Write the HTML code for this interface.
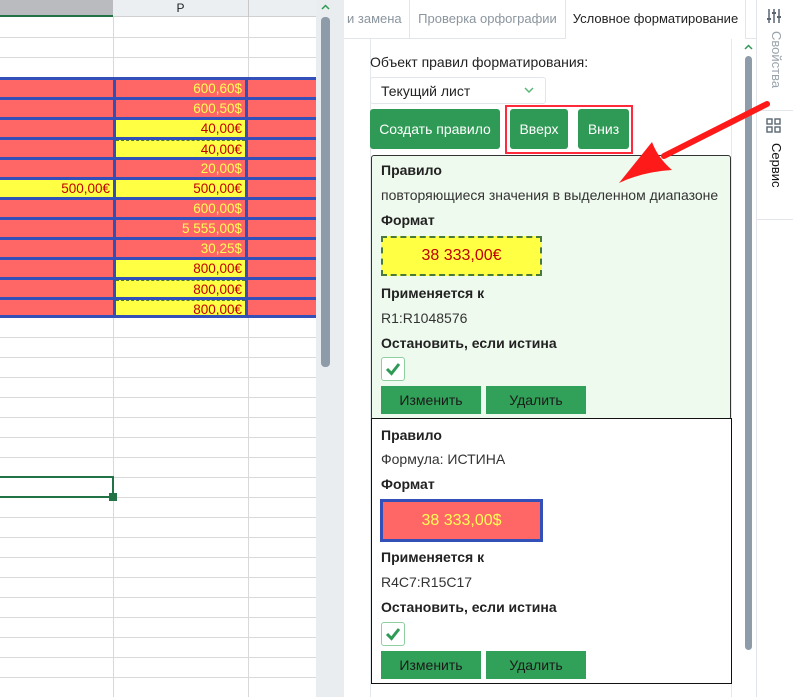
<!DOCTYPE html>
<html><head><meta charset="utf-8"><style>
*{box-sizing:border-box;margin:0;padding:0}
body{width:793px;height:697px;overflow:hidden;background:#fff;font-family:"Liberation Sans","DejaVu Sans",sans-serif;position:relative;color:#222}
.a{position:absolute}
.hl{position:absolute;left:0;width:316px;height:1px;background:#d9d9d9}
.vl{position:absolute;top:17px;width:1px;height:680px;background:#d9d9d9}
.row{position:absolute;left:0;width:316px;height:20px;background:#ff6666;border-top:3px solid #3350b9}
.c{position:absolute;top:0;height:17px;font-size:13.5px;text-align:right;padding-right:3px;line-height:17px}
.btn{position:absolute;background:#2f9a55;color:#fff;font-size:14px;text-align:center;border-radius:3px}
.b2{position:absolute;background:#31a058;color:#1a1a1a;font-size:14px;text-align:center;width:100px;height:28px;line-height:28px}
.lbl{position:absolute;font-size:14px;font-weight:bold;color:#222}
.txt{position:absolute;font-size:14px;color:#333}
.chk{position:absolute;width:24px;height:24px;border:1px solid #8fcf9f;border-radius:3px;background:#fff}
</style></head><body>
<div class="a" style="left:0;top:0;width:113px;height:17px;background:#b9bbbe;border-bottom:2px solid #217346"></div>
<div class="a" style="left:113px;top:0;width:203px;height:17px;background:#eceff1;border-bottom:1px solid #d0d0d0"></div>
<div class="a" style="left:113px;top:0;width:135px;height:17px;text-align:center;font-size:12px;line-height:17px">P</div>
<div class="a" style="left:248px;top:0;width:1px;height:17px;background:#c8c8c8"></div>
<div class="vl" style="left:113px"></div><div class="vl" style="left:248px"></div>
<div class="hl" style="top:37px"></div><div class="hl" style="top:57px"></div>
<div class="hl" style="top:337px"></div><div class="hl" style="top:357px"></div><div class="hl" style="top:377px"></div><div class="hl" style="top:397px"></div><div class="hl" style="top:417px"></div><div class="hl" style="top:437px"></div><div class="hl" style="top:457px"></div><div class="hl" style="top:477px"></div><div class="hl" style="top:497px"></div><div class="hl" style="top:517px"></div><div class="hl" style="top:537px"></div><div class="hl" style="top:557px"></div><div class="hl" style="top:577px"></div><div class="hl" style="top:597px"></div><div class="hl" style="top:617px"></div><div class="hl" style="top:637px"></div><div class="hl" style="top:657px"></div><div class="hl" style="top:677px"></div>
<div class="a" style="left:0;top:77px;width:316px;height:241px;background:#3350b9"></div>
<div class="row" style="top:77px"><div class="c" style="left:116px;width:129px;color:#ffff55">600,60$</div></div>
<div class="row" style="top:97px"><div class="c" style="left:116px;width:129px;color:#ffff55">600,50$</div></div>
<div class="row" style="top:117px"><div class="c" style="left:116px;width:129px;background:#ffff44;color:#c00000">40,00€</div></div>
<div class="row" style="top:137px"><div class="c" style="left:116px;width:129px;background:#ffff44;color:#c00000;border-top:1px dashed #4a7a3a">40,00€</div></div>
<div class="row" style="top:157px"><div class="c" style="left:116px;width:129px;color:#ffff55">20,00$</div></div>
<div class="row" style="top:177px"><div class="c" style="left:0;width:113px;background:#ffff44;color:#c00000">500,00€</div><div class="c" style="left:116px;width:129px;background:#ffff44;color:#c00000">500,00€</div></div>
<div class="row" style="top:197px"><div class="c" style="left:116px;width:129px;color:#ffff55">600,00$</div></div>
<div class="row" style="top:217px"><div class="c" style="left:116px;width:129px;color:#ffff55">5 555,00$</div></div>
<div class="row" style="top:237px"><div class="c" style="left:116px;width:129px;color:#ffff55">30,25$</div></div>
<div class="row" style="top:257px"><div class="c" style="left:116px;width:129px;background:#ffff44;color:#c00000">800,00€</div></div>
<div class="row" style="top:277px"><div class="c" style="left:116px;width:129px;background:#ffff44;color:#c00000;border-top:1px dashed #4a7a3a">800,00€</div></div>
<div class="row" style="top:297px"><div class="c" style="left:116px;width:129px;background:#ffff44;color:#c00000;border-top:1px dashed #4a7a3a;border-bottom:1px dashed #4a7a3a">800,00€</div></div>
<div class="a" style="left:0;top:315px;width:316px;height:3px;background:#3350b9"></div>
<div class="a" style="left:113px;top:77px;width:3px;height:241px;background:#3350b9"></div>
<div class="a" style="left:245px;top:77px;width:3px;height:241px;background:#3350b9"></div>
<div class="a" style="left:-3px;top:476px;width:117px;height:22px;border:2px solid #217346"></div>
<div class="a" style="left:109px;top:493px;width:8px;height:8px;background:#217346"></div>
<div class="a" style="left:316px;top:0;width:28px;height:697px;background:#e9edf0"></div>
<div class="a" style="left:321px;top:17px;width:9px;height:350px;background:#8d9ca8;border-radius:4px"></div>
<svg class="a" style="left:321px;top:4px" width="9" height="6"><path d="M1 5L4.5 1.5L8 5" stroke="#2f9a55" stroke-width="1.5" fill="none"/></svg>
<div class="a" style="left:344px;top:0;width:413px;height:697px;background:#fff"></div>
<div class="a" style="left:344px;top:38px;width:413px;height:1px;background:#e2e6ea"></div>
<div class="a" style="left:344px;top:0;width:65px;height:38px;font-size:13px;color:#8b959e;line-height:38px;padding-left:3px">и замена</div>
<div class="a" style="left:409px;top:0;width:1px;height:38px;background:#e2e6ea"></div>
<div class="a" style="left:410px;top:0;width:155px;height:38px;font-size:13px;color:#8b959e;line-height:38px;text-align:center">Проверка орфографии</div>
<div class="a" style="left:565px;top:0;width:181px;height:39px;background:#fff;border-left:1px solid #e2e6ea;border-right:1px solid #e2e6ea;font-size:13px;color:#222;line-height:38px;text-align:center">Условное форматирование</div>
<div class="a" style="left:370px;top:39px;width:1px;height:658px;background:#e6e9ec"></div>
<div class="a" style="left:731px;top:39px;width:1px;height:658px;background:#e6e9ec"></div>
<svg class="a" style="left:744px;top:44px" width="9" height="6"><path d="M1 5L4.5 1.5L8 5" stroke="#2f9a55" stroke-width="1.5" fill="none"/></svg>
<div class="a" style="left:745px;top:56px;width:7px;height:594px;background:#8d9ca8;border-radius:4px"></div>
<div class="a" style="left:756px;top:0;width:1px;height:697px;background:#e2e6ea"></div>
<div class="txt" style="left:370px;top:54px;color:#222">Объект правил форматирования:</div>
<div class="a" style="left:370px;top:77px;width:176px;height:27px;border:1px solid #e2e6ea;border-radius:3px;font-size:14px;line-height:27px;padding-left:10px">Текущий лист</div>
<svg class="a" style="left:524px;top:87px" width="10" height="6"><path d="M1 1L5 5L9 1" stroke="#5cb87a" stroke-width="1.5" fill="none"/></svg>
<div class="btn" style="left:370px;top:109px;width:130px;height:40px;line-height:40px">Создать правило</div>
<div class="a" style="left:505px;top:105px;width:128px;height:49px;border:2px solid #ff2a3a"></div>
<div class="btn" style="left:510px;top:109px;width:58px;height:40px;line-height:40px">Вверх</div>
<div class="btn" style="left:578px;top:109px;width:51px;height:40px;line-height:40px">Вниз</div>
<div class="a" style="left:371px;top:155px;width:360px;height:265px;background:#effaee;border:1px solid #333;border-radius:3px"></div>
<div class="lbl" style="left:381px;top:162px">Правило</div>
<div class="txt" style="left:381px;top:187px">повторяющиеся значения в выделенном диапазоне</div>
<div class="lbl" style="left:381px;top:212px">Формат</div>
<div class="a" style="left:381px;top:236px;width:161px;height:40px;background:#ffff44;border:2px dashed #4a7a3a;color:#c00000;font-size:16px;text-align:center;line-height:36px">38 333,00€</div>
<div class="lbl" style="left:381px;top:285px">Применяется к</div>
<div class="txt" style="left:381px;top:310px">R1:R1048576</div>
<div class="lbl" style="left:381px;top:335px">Остановить, если истина</div>
<div class="chk" style="left:381px;top:357px"><svg width="22" height="22"><path d="M5 11L9.5 15.5L17 6" stroke="#2f9a55" stroke-width="3" fill="none"/></svg></div>
<div class="b2" style="left:381px;top:386px">Изменить</div>
<div class="b2" style="left:486px;top:386px">Удалить</div>
<div class="a" style="left:371px;top:418px;width:361px;height:266px;background:#fff;border:1px solid #111"></div>
<div class="lbl" style="left:381px;top:427px">Правило</div>
<div class="txt" style="left:381px;top:451px">Формула: ИСТИНА</div>
<div class="lbl" style="left:381px;top:476px">Формат</div>
<div class="a" style="left:380px;top:499px;width:163px;height:43px;background:#ff6666;border:3px solid #3350b9;color:#ffff55;font-size:16px;text-align:center;line-height:37px">38 333,00$</div>
<div class="lbl" style="left:381px;top:549px">Применяется к</div>
<div class="txt" style="left:381px;top:574px">R4C7:R15C17</div>
<div class="lbl" style="left:381px;top:599px">Остановить, если истина</div>
<div class="chk" style="left:381px;top:622px"><svg width="22" height="22"><path d="M5 11L9.5 15.5L17 6" stroke="#2f9a55" stroke-width="3" fill="none"/></svg></div>
<div class="b2" style="left:381px;top:651px">Изменить</div>
<div class="b2" style="left:486px;top:651px">Удалить</div>
<div class="a" style="left:757px;top:110px;width:36px;height:1px;background:#e2e6ea"></div>
<div class="a" style="left:757px;top:219px;width:36px;height:1px;background:#e2e6ea"></div>
<svg class="a" style="left:766px;top:8px" width="16" height="16" viewBox="0 0 16 16" fill="none" stroke="#5a6670" stroke-width="1.5"><path d="M3 1v14M8 1v14M13 1v14"/><path d="M1 11h4M6 5h4M11 9h4" stroke-width="2"/></svg>
<div class="a" style="left:766px;top:31px;width:18px;height:60px;writing-mode:vertical-rl;font-size:13px;color:#9aa3ab">Свойства</div>
<svg class="a" style="left:766px;top:118px" width="15" height="15" viewBox="0 0 15 15" fill="none" stroke="#5a6670" stroke-width="1.4"><rect x="1" y="1" width="5" height="5"/><rect x="9" y="1" width="5" height="5"/><rect x="1" y="9" width="5" height="5"/><rect x="9" y="9" width="5" height="5"/></svg>
<div class="a" style="left:766px;top:143px;width:18px;height:50px;writing-mode:vertical-rl;font-size:13px;color:#111">Сервис</div>
<svg class="a" style="left:0;top:0" width="793" height="697"><path d="M767 104 L664 156" stroke="#ff1a1a" stroke-width="6" stroke-linecap="round"/><path d="M619 183 L652 142 Q658 158 672 170 Q642 172 619 183Z" fill="#ff1a1a"/></svg>
</body></html>
